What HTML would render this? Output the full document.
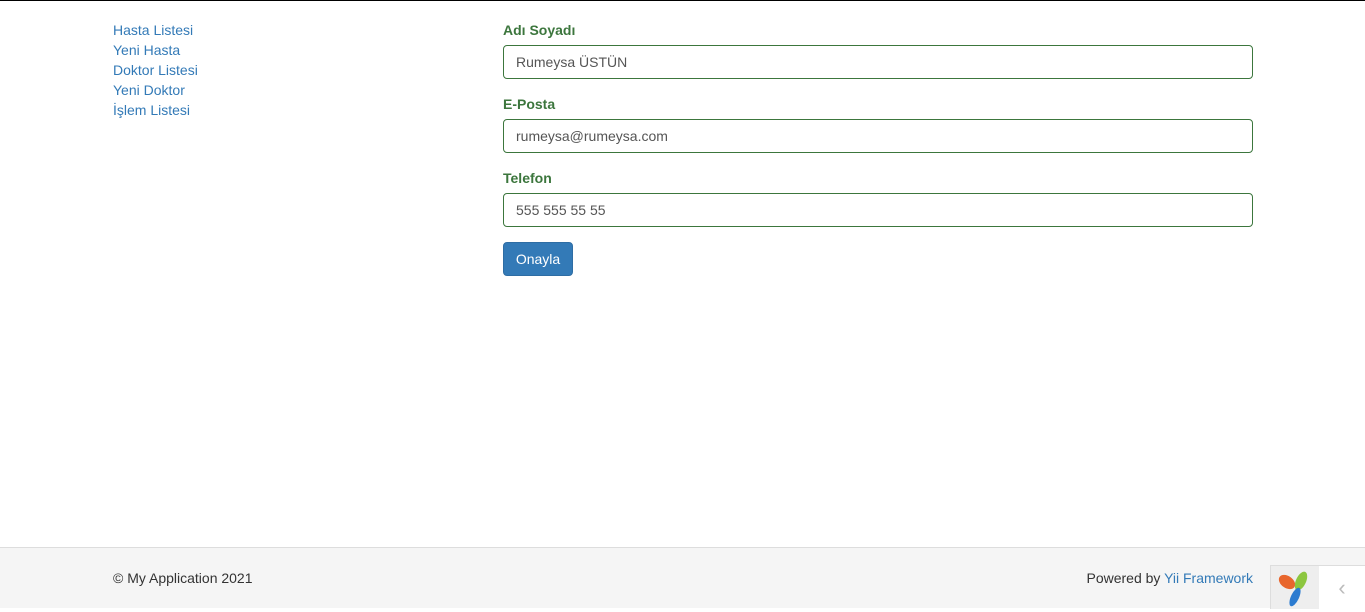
<!DOCTYPE html>
<html><head><meta charset="utf-8"><style>
body{margin:0;width:1365px;height:607px;position:relative;overflow:hidden;font-family:"Liberation Sans",sans-serif;font-size:14px;color:#333;background:#fff}
.top{position:absolute;top:0;left:0;width:1365px;height:1px;background:#000}
.menu{position:absolute;left:113px;top:20px;line-height:20px}
.menu a{display:block;color:#337ab7;text-decoration:none}
.form{position:absolute;left:503px;top:0;width:750px}
label{position:absolute;left:0;font-weight:bold;color:#3c763d}
.in{position:absolute;left:0;width:748px;height:32px;border:1px solid #3c763d;border-radius:4px;box-sizing:content-box;padding:0;line-height:32px;text-indent:12px;color:#555}
.btn{position:absolute;left:0;top:242px;width:68px;height:32px;background:#337ab7;border:1px solid #2e6da4;border-radius:4px;color:#fff;line-height:32px;text-align:center}
.foot{position:absolute;left:0;top:547px;width:1365px;height:60px;background:#f5f5f5;border-top:1px solid #ddd}
.foot .l{position:absolute;left:113px;top:22px}
.foot .r{position:absolute;right:112px;top:22px}
.foot .r a{color:#337ab7}
.yii{position:absolute;left:1270px;top:17px;width:48px;height:43px;background:#eee;border:1px solid #ddd;border-bottom:none}
.tog{position:absolute;left:1319px;top:17px;width:46px;height:43px;background:#fff;border-top:1px solid #ddd;color:#bbb;text-align:center;line-height:43px;font-size:22px}
</style></head><body>
<div class="top"></div>
<div class="menu"><a>Hasta Listesi</a><a>Yeni Hasta</a><a>Doktor Listesi</a><a>Yeni Doktor</a><a>İşlem Listesi</a></div>
<div class="form">
<label style="top:22px">Adı Soyadı</label><div class="in" style="top:45px">Rumeysa ÜSTÜN</div>
<label style="top:96px">E-Posta</label><div class="in" style="top:119px">rumeysa@rumeysa.com</div>
<label style="top:170px">Telefon</label><div class="in" style="top:193px">555 555 55 55</div>
<div class="btn">Onayla</div>
</div>
<div class="foot"><span class="l">© My Application 2021</span><span class="r">Powered by <a>Yii Framework</a></span>
<div class="yii"><svg width="48" height="43" viewBox="0 0 48 43"><ellipse cx="16" cy="16" rx="9" ry="6" fill="#e8662d" transform="rotate(35 16 16)"/><ellipse cx="30" cy="15" rx="5" ry="10" fill="#8cc63f" transform="rotate(25 30 15)"/><ellipse cx="24" cy="31" rx="4" ry="10" fill="#2b7bd0" transform="rotate(25 24 31)"/></svg></div>
<div class="tog">‹</div></div>
</body></html>
